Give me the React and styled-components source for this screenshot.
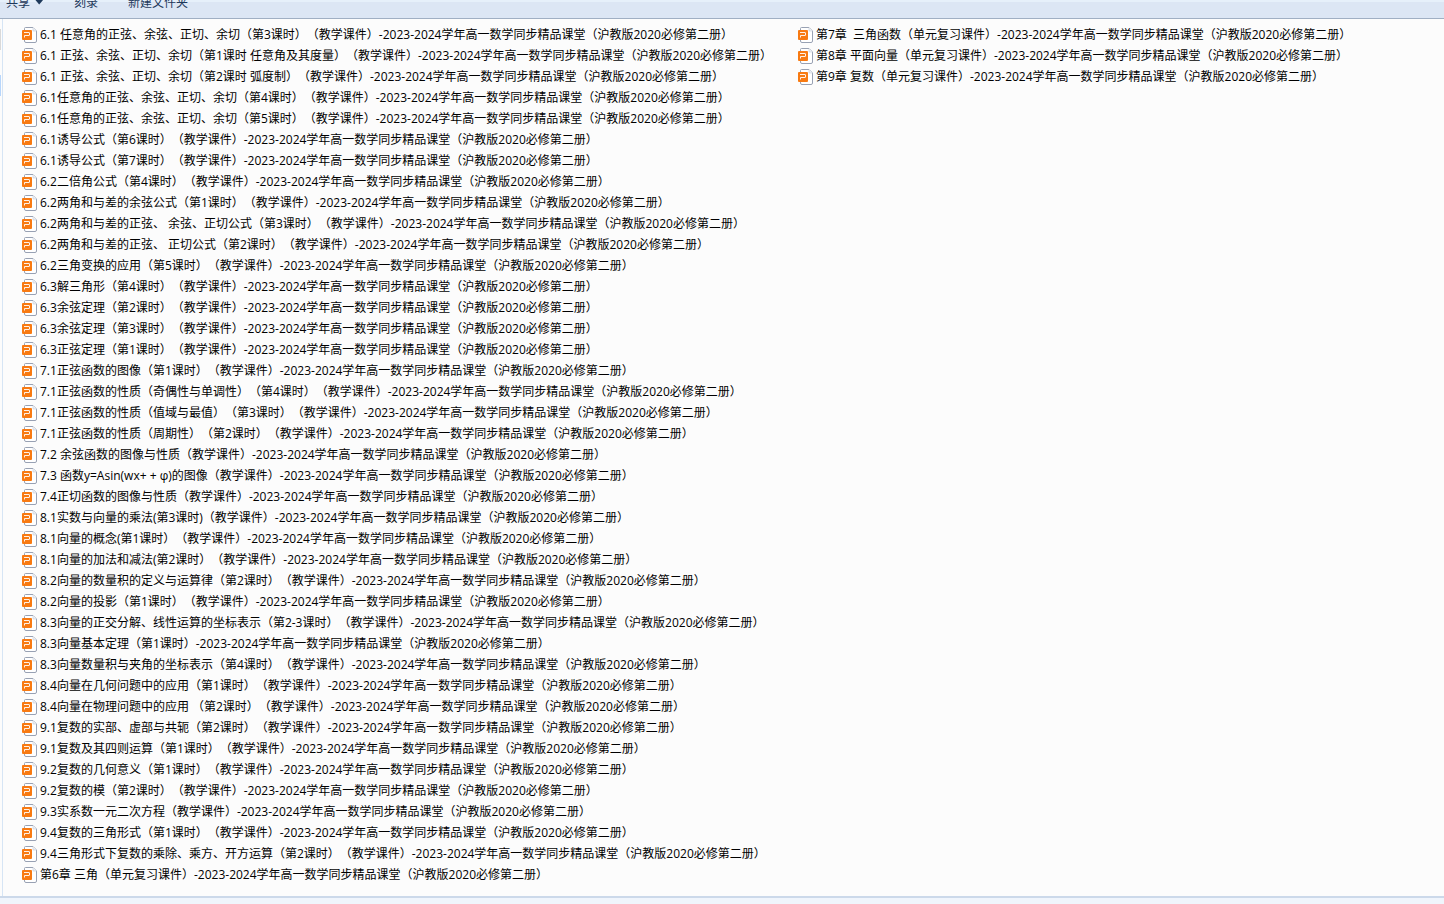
import React from 'react';
import styled, { createGlobalStyle } from 'styled-components';

const GlobalStyle = createGlobalStyle`
  * {
    box-sizing: border-box;
  }

  body {
    margin: 0;
    background-color: #fcfcfc;
    color: #000;
    font-family: 'Open Sans', 'Noto Sans CJK SC', sans-serif;
    font-size: 12px;
    text-spacing-trim: space-all;
  }
`;

const Window = styled.div`
  min-height: 100vh;
  display: flex;
  flex-direction: column;
  overflow: hidden;
`;

const Toolbar = styled.header`
  height: 19px;
  display: flex;
  align-items: flex-end;
  gap: 30px;
  padding: 0 6px 6px;
  overflow: hidden;
  background: linear-gradient(#e6f0fa 0, #e6f0fa 2px, #dce6f4 2px, #dce6f4 100%);
  border-bottom: 1px solid #a0afc3;
`;

const ToolButton = styled.button`
  display: flex;
  align-items: center;
  gap: 4px;
  padding: 0;
  border: 0;
  background: none;
  color: #1e395b;
  font: inherit;
  line-height: 18px;
  cursor: pointer;
`;

const Body = styled.div`
  flex: 1;
  display: flex;
`;

const NavPane = styled.aside`
  width: 3px;
  flex-shrink: 0;
  display: flex;
  flex-direction: column;
  gap: 25px;
  padding: 10px 1px 0 0;
  border-right: 1px solid #d6e5f5;
`;

const NavEdge = styled.span`
  height: 21px;
  background-color: ${(props) => (props.$active ? '#b8d6fb' : '#d9d9d9')};
`;

const FileList = styled.ul`
  display: grid;
  grid-auto-flow: column;
  grid-template-rows: repeat(41, 21px);
  grid-auto-columns: 776px;
  margin: 0;
  padding: 5px 0 11px 18px;
  list-style: none;
`;

const FileLink = styled.a`
  display: flex;
  align-items: center;
  gap: 3px;
  height: 21px;
  color: inherit;
  line-height: 21px;
  text-decoration: none;
  white-space: pre;
`;

const StatusBar = styled.footer`
  height: 8px;
  background-color: #f0f5fc;
  border-top: 2px solid #ccd9ea;
`;

const files = [
  '6.1 任意角的正弦、余弦、正切、余切（第3课时）（教学课件）',
  '6.1 正弦、余弦、正切、余切（第1课时 任意角及其度量）（教学课件）',
  '6.1 正弦、余弦、正切、余切（第2课时 弧度制）（教学课件）',
  '6.1任意角的正弦、余弦、正切、余切（第4课时）（教学课件）',
  '6.1任意角的正弦、余弦、正切、余切（第5课时）（教学课件）',
  '6.1诱导公式（第6课时）（教学课件）',
  '6.1诱导公式（第7课时）（教学课件）',
  '6.2二倍角公式（第4课时）（教学课件）',
  '6.2两角和与差的余弦公式（第1课时）（教学课件）',
  '6.2两角和与差的正弦、 余弦、正切公式（第3课时）（教学课件）',
  '6.2两角和与差的正弦、 正切公式（第2课时）（教学课件）',
  '6.2三角变换的应用（第5课时）（教学课件）',
  '6.3解三角形（第4课时）（教学课件）',
  '6.3余弦定理（第2课时）（教学课件）',
  '6.3余弦定理（第3课时）（教学课件）',
  '6.3正弦定理（第1课时）（教学课件）',
  '7.1正弦函数的图像（第1课时）（教学课件）',
  '7.1正弦函数的性质（奇偶性与单调性）（第4课时）（教学课件）',
  '7.1正弦函数的性质（值域与最值）（第3课时）（教学课件）',
  '7.1正弦函数的性质（周期性）（第2课时）（教学课件）',
  '7.2 余弦函数的图像与性质（教学课件）',
  '7.3 函数y=Asin(wx+ + φ)的图像（教学课件）',
  '7.4正切函数的图像与性质（教学课件）',
  '8.1实数与向量的乘法(第3课时)（教学课件）',
  '8.1向量的概念(第1课时）（教学课件）',
  '8.1向量的加法和减法(第2课时）（教学课件）',
  '8.2向量的数量积的定义与运算律（第2课时）（教学课件）',
  '8.2向量的投影（第1课时）（教学课件）',
  '8.3向量的正交分解、线性运算的坐标表示（第2-3课时）（教学课件）',
  '8.3向量基本定理（第1课时）',
  '8.3向量数量积与夹角的坐标表示（第4课时）（教学课件）',
  '8.4向量在几何问题中的应用（第1课时）（教学课件）',
  '8.4向量在物理问题中的应用 （第2课时）（教学课件）',
  '9.1复数的实部、虚部与共轭（第2课时）（教学课件）',
  '9.1复数及其四则运算（第1课时）（教学课件）',
  '9.2复数的几何意义（第1课时）（教学课件）',
  '9.2复数的模（第2课时）（教学课件）',
  '9.3实系数一元二次方程（教学课件）',
  '9.4复数的三角形式（第1课时）（教学课件）',
  '9.4三角形式下复数的乘除、乘方、开方运算（第2课时）（教学课件）',
  '第6章 三角（单元复习课件）',
  '第7章  三角函数（单元复习课件）',
  '第8章 平面向量（单元复习课件）',
  '第9章 复数（单元复习课件）',
];

const series = '-2023-2024学年高一数学同步精品课堂（沪教版2020必修第二册）';

const SlidesIcon = () => (
  <svg width='16' height='17' viewBox='0 0 16 17' aria-hidden='true'>
    <path
      d='M4.5 1.5H12L15.5 5V15Q15.5 16.5 14 16.5H5Q3.5 16.5 3.5 15V2.5Q3.5 1.5 4.5 1.5Z'
      fill='#fff'
      stroke='#98a1b3'
    />
    <path d='M12 1.5V5H15.5' fill='#eef1f6' stroke='#c5cbd6' strokeWidth='0.6' />
    <rect x='1' y='4' width='10' height='10' rx='1' fill='#f87a12' />
    <path
      d='M3 6.5H8Q8.5 6.5 8.5 7V9Q8.5 9.5 8 9.5H3.5V11.5'
      fill='none'
      stroke='#fff'
      strokeWidth='0.9'
    />
  </svg>
);

const App = () => {
  return (
    <Window>
      <GlobalStyle />
      <Toolbar>
        <ToolButton type='button'>
          共享
          <svg width='10' height='8' viewBox='0 0 10 8' aria-hidden='true'>
            <path d='M1 0.5H9.5L5.2 5.5Z' fill='#1e395b' />
          </svg>
        </ToolButton>
        <ToolButton type='button'>刻录</ToolButton>
        <ToolButton type='button'>新建文件夹</ToolButton>
      </Toolbar>
      <Body>
        <NavPane>
          <NavEdge />
          <NavEdge $active />
        </NavPane>
        <FileList>
          {files.map((name) => (
            <li key={name}>
              <FileLink href='#'>
                <SlidesIcon />
                {name + series}
              </FileLink>
            </li>
          ))}
        </FileList>
      </Body>
      <StatusBar />
    </Window>
  );
};

export default App;
